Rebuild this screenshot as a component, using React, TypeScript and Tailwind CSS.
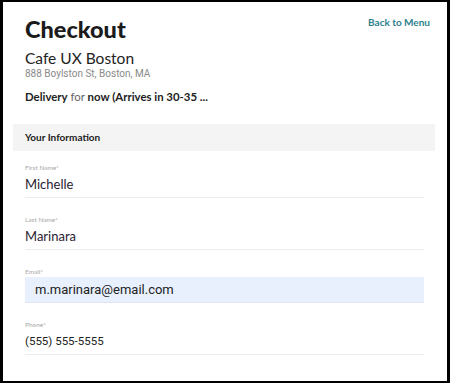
import React from "react";

type FieldProps = {
  label: string
  value: string
  autofilled?: boolean
  valueClass?: string
}

function Field({ label, value, autofilled, valueClass }: FieldProps) {
  if (autofilled) {
    return (
      <div className="pt-[12px]">
        <div className="text-[6.5px] leading-[10px] text-[#a8a8a8]">{label}</div>
        <div className="h-[26px] bg-[#e8f0fe] border-b border-[#dfe6f2] pl-[10px] font-['Roboto',sans-serif] text-[13px] leading-[25px] text-[#222]">
          {value}
        </div>
      </div>
    )
  }
  return (
    <div className="pt-[12px] border-b border-[#ececec]">
      <div className="text-[6.5px] leading-[10px] text-[#a8a8a8]">{label}</div>
      <div className={"mt-[3px] pb-[5px] leading-[16px] " + (valueClass ?? "text-[13px] text-[#2a2230]")}>{value}</div>
    </div>
  )
}

export default function App() {
  return (
    <div className="w-[450px] h-[383px] bg-white border-black border-l-[3px] border-r-[3px] border-t-2 border-b-2 font-['Lato','Roboto',sans-serif] overflow-hidden">
      <div className="flex justify-between pl-[22px] pr-[17px] pt-[12px]">
        <div>
          <h1 className="text-[23.5px] leading-[30px] font-black text-[#1b1b1b]">Checkout</h1>
          <div className="mt-[5px] text-[15.5px] leading-[18px] text-[#222]">Cafe UX Boston</div>
          <div className="font-['Roboto',sans-serif] text-[10px] leading-[14px] text-[#8a8a8a]">
            888 Boylston St, Boston, MA
          </div>
          <div className="mt-[9px] text-[11.4px] leading-[14px] text-[#222]">
            <span className="font-bold">Delivery</span>
            <span className="text-[#666]"> for </span>
            <span className="font-bold">now (Arrives in 30-35 ...</span>
          </div>
        </div>
        <a className="mt-[1px] text-[10px] leading-[14px] font-bold text-[#2e7f8c]">Back to Menu</a>
      </div>

      <div className="mt-[20px] ml-[10px] mr-[12px] h-[27px] bg-[#f4f4f4] pl-[12px] text-[10px] leading-[27px] font-bold text-[#222]">
        Your Information
      </div>

      <div className="ml-[22px] mr-[23px] flex flex-col gap-[5px]">
        <Field label="First Name*" value="Michelle" />
        <Field label="Last Name*" value="Marinara" />
        <Field label="Email*" value="m.marinara@email.com" autofilled />
        <Field label="Phone*" value="(555) 555-5555" valueClass="font-['Roboto',sans-serif] text-[11.5px] text-[#222]" />
      </div>
    </div>
  )
}
